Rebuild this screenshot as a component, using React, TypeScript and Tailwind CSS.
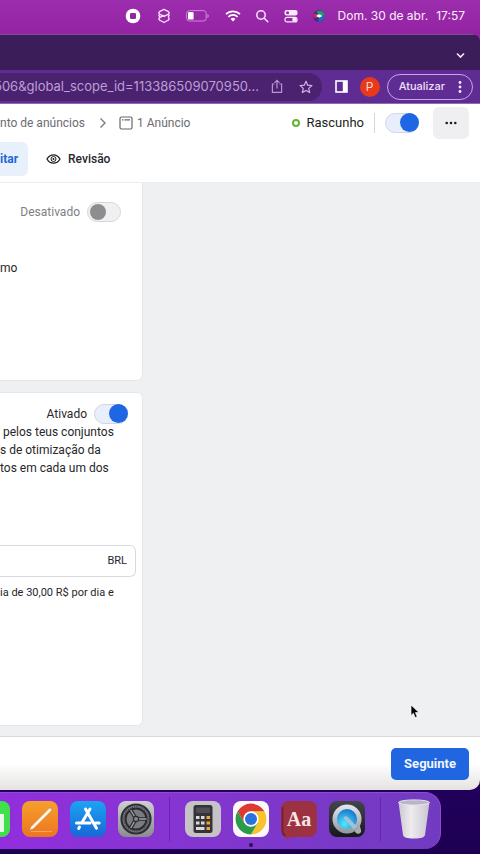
import { useState } from "react";
import type { ReactNode } from "react";

function Toggle({ label, initial }: { label: string; initial: boolean }) {
  const [on, setOn] = useState(initial);
  return (
    <input
      type="checkbox"
      role="switch"
      aria-label={label}
      checked={on}
      onChange={() => setOn(!on)}
      className="relative h-5 w-[34px] shrink-0 appearance-none rounded-full border border-[#d8d8dc] bg-[#f0f0f2] before:absolute before:left-0.5 before:top-px before:size-4 before:rounded-full before:bg-[#8d8d8f] checked:border-[#cfd6e6] checked:bg-[#e8effb] checked:before:-top-px checked:before:left-3.5 checked:before:size-[19px] checked:before:bg-[#1f66e5]"
    />
  );
}

function MenuBar() {
  return (
    <header className="flex h-[34px] items-center justify-end pr-[15px] pb-0.5 text-[#f7e6fa]">
      <div className="flex items-center">
        <svg width="16" height="16" viewBox="0 0 16 16" className="mr-[15px]">
          <circle cx="8" cy="8" r="7.3" fill="#fff" />
          <rect x="5" y="5" width="6" height="6" rx="1.2" fill="#8a2a9c" />
        </svg>
        <svg width="16" height="16" viewBox="0 0 16 16" fill="none" stroke="currentColor" strokeWidth="1.3" strokeLinejoin="round" className="mr-3.5">
          <path d="M8 1.4 12 3.3c1.600.8 1.600 2.200 0 3L8 8.300 4 6.300c-1.600-.8-1.600-2.200 0-3z" />
          <path d="M4 6.300c-1.500.8-1.500 1.800 0 2.600M12 6.300c1.500.8 1.500 1.800 0 2.600" />
          <path d="M8 7.300 4 9.300c-1.600.8-1.600 2.200 0 3l4 2.200 4-2.200c1.600-.8 1.600-2.200 0-3" />
        </svg>
        <svg width="23" height="12" viewBox="0 0 23 12" className="mr-4">
          <rect x=".6" y=".6" width="19.6" height="10.4" rx="2.8" fill="none" stroke="#cf86d8" strokeWidth="1" />
          <rect x="2" y="2" width="5.6" height="7.6" rx="1.2" fill="#fff" />
          <path d="M21.4 4v3.8c1-.4 1.4-1 1.4-1.9s-.4-1.5-1.4-1.9z" fill="#cf86d8" />
        </svg>
        <svg width="16" height="12" viewBox="0 0 16 12" fill="none" stroke="#fff" className="mr-3.5">
          <path d="M1 4.2a10 10 0 0 1 14 0" strokeWidth="1.7" />
          <path d="M3.4 6.8a6.6 6.6 0 0 1 9.2 0" strokeWidth="1.7" />
          <path d="M5.6 8.9a3.5 3.5 0 0 1 4.8 0L8 11.4z" fill="#fff" stroke="none" />
        </svg>
        <svg width="14" height="14" viewBox="0 0 14 14" fill="none" stroke="currentColor" strokeWidth="1.5" strokeLinecap="round" className="mr-[15px]">
          <circle cx="6" cy="6" r="4.2" />
          <path d="m9.2 9.2 3.6 3.6" />
        </svg>
        <svg width="14" height="14" viewBox="0 0 14 14" className="mr-3.5">
          <rect x=".5" y="1" width="13" height="5.4" rx="2" fill="#f9e9fb" />
          <circle cx="3.600" cy="3.700" r="1.500" fill="#8f2ba2" />
          <rect x="1" y="8.3" width="12" height="4.6" rx="2" fill="none" stroke="#f9e9fb" strokeWidth="1.2" />
          <circle cx="10.400" cy="10.600" r="2.200" fill="#f9e9fb" />
        </svg>
        <svg width="14" height="14" viewBox="0 0 14 14" className="mr-3">
          <circle cx="7" cy="7" r="6" fill="#4a2a80" />
          <path d="M4.500 2.500c4-2 8 .5 8.300 4L7 7z" fill="#1f9c74" />
          <path d="M12.800 6.500c.2 4-3 6.500-6.300 6.300L7 7z" fill="#2568b8" />
          <path d="M1.200 6.500c0-2 2.500-3 6 .3-2 3-5.500 2.700-6-.3z" fill="#c0305f" />
          <path d="M4.500 7c1-1.800 4-2 5.500 0-1.500 2-4.500 1.800-5.500 0z" fill="#fff" />
        </svg>
      </div>
      <div className="flex gap-2 font-['Inter','Liberation_Sans',sans-serif] text-xs text-[#fbeefc]">
        <span>Dom. 30 de abr.</span>
        <time>17:57</time>
      </div>
    </header>
  );
}

function BrowserChrome() {
  return (
    <>
      <div className="flex h-9 items-center justify-end border-t border-[#7d4e9a] bg-[#3b1e59] pt-1.5 pr-3.5">
        <button aria-label="Pesquisar separadores">
          <svg width="11" height="11" viewBox="0 0 11 11" fill="none" stroke="#f1e8f8" strokeWidth="1.600">
            <path d="m2 3.500 3.500 3.500L9 3.500" />
          </svg>
        </button>
      </div>
      <div className="flex h-[34px] items-center border-b border-[#8d6db0] bg-[#5f2c94] font-['Inter','Liberation_Sans',sans-serif]">
        <div className="flex h-7 min-w-0 flex-1 items-center rounded-r-full bg-[#4a226f] pr-[9px]">
          <input
            aria-label="Endereço"
            readOnly
            value="506&global_scope_id=113386509070950..."
            className="-ml-1.5 min-w-0 flex-1 bg-transparent text-[13px] text-[#bd9fd6] outline-none"
          />
          <button aria-label="Partilhar" className="mr-[15px]">
            <svg width="14" height="15" viewBox="0 0 14 15" fill="none" stroke="#b795d3" strokeWidth="1.200">
              <path d="M4.500 5H2.400v8.300h9.200V5H9.500M7 9.500V1.500M4.500 3.900 7 1.400l2.500 2.500" />
            </svg>
          </button>
          <button aria-label="Marcar">
            <svg width="14" height="14" viewBox="0 0 14 14" fill="none" stroke="#cfb3e6" strokeWidth="1.200" strokeLinejoin="round">
              <path d="m7 1.300 1.700 3.900 4.200.4-3.200 2.800 1 4.200L7 10.400l-3.700 2.200 1-4.200L1.100 5.600l4.200-.4z" />
            </svg>
          </button>
        </div>
        <button aria-label="Painel lateral" className="ml-[13px]">
          <svg width="13" height="13" viewBox="0 0 13 13">
            <rect x="1" y="1" width="11" height="11" fill="none" stroke="#fff" strokeWidth="1.600" />
            <path d="M7.800 1H12v11H7.800z" fill="#fff" />
          </svg>
        </button>
        <button className="ml-3 size-5 rounded-full bg-[#e8391b] text-xs text-[#ffd9cc]">P</button>
        <button className="mx-[7px] flex h-[26px] items-center rounded-full border border-[#c9a6ea] pr-2.5 pl-[11px] text-[11px] font-medium text-[#f0e0fb]">
          Atualizar
          <svg width="4" height="14" viewBox="0 0 4 14" fill="#f5eafd" className="ml-[13px]">
            <circle cx="2" cy="2.500" r="1.400" />
            <circle cx="2" cy="7" r="1.400" />
            <circle cx="2" cy="11.500" r="1.400" />
          </svg>
        </button>
      </div>
    </>
  );
}

function PageHeader() {
  return (
    <div className="border-b border-[#ededef] bg-white">
      <div className="flex h-[38px] items-center pr-[11px]">
        <nav className="flex items-center text-xs text-[#6b6c72]">
          <a href="#conjunto" className="whitespace-nowrap">nto de anúncios</a>
          <svg width="8" height="12" viewBox="0 0 8 12" fill="none" stroke="#7b7c82" strokeWidth="1.400" className="ml-3.5">
            <path d="m1.500 1.500 4.500 4.500-4.500 4.500" />
          </svg>
          <a href="#anuncio" className="ml-3 flex items-center gap-1 whitespace-nowrap">
            <svg width="14" height="14" viewBox="0 0 14 14" fill="none" stroke="#65666c" strokeWidth="1.200">
              <rect x="1" y="1" width="12" height="12" rx="1.500" />
              <path d="M3 3.800h1.500M5.500 3.800h5.500" />
            </svg>
            1 Anúncio
          </a>
        </nav>
        <div className="ml-auto flex items-center">
          <span className="size-2 rounded-full border-2 border-[#66b32e]" />
          <span className="ml-1.5 text-[13px] text-[#1c1e21]">Rascunho</span>
          <span className="mr-2.5 ml-2.5 h-5 w-px bg-[#d5d6da]" />
          <Toggle label="Rascunho" initial={true} />
          <button aria-label="Mais opções" className="ml-3.5 flex h-8 w-9 items-center justify-center rounded-md bg-[#efeff1]">
            <svg width="12" height="4" viewBox="0 0 12 4" fill="#1c1e21">
              <circle cx="1.700" cy="2" r="1.300" />
              <circle cx="6" cy="2" r="1.300" />
              <circle cx="10.300" cy="2" r="1.300" />
            </svg>
          </button>
        </div>
      </div>
      <div className="flex h-10 items-start font-medium">
        <button className="h-[34px] rounded-r-md bg-[#e8f0fc] pr-2.5 text-xs font-bold text-[#1f66d5]">itar</button>
        <button className="ml-[18px] flex h-[34px] items-center gap-[7px] text-xs text-[#26272b]">
          <svg width="15" height="12" viewBox="0 0 15 12" fill="none" stroke="#1c1e21" strokeWidth="1.300">
            <path d="M1 6c1.500-2.700 3.700-4.200 6.500-4.200S12.500 3.300 14 6c-1.500 2.700-3.700 4.200-6.500 4.200S2.500 8.700 1 6z" />
            <circle cx="7.500" cy="6" r="2.500" strokeWidth="1" />
            <circle cx="7.500" cy="6" r="1" fill="#1c1e21" stroke="none" />
          </svg>
          Revisão
        </button>
      </div>
    </div>
  );
}

function Campaign() {
  return (
    <main className="flex bg-[#eff0f2] pb-2.5">
      <div className="flex w-[143px] shrink-0 flex-col gap-[11px] text-xs text-[#26272b]">
        <section className="h-[198px] rounded-br-md border-r border-b border-[#e6e7e9] bg-white pt-[19px]">
          <div className="flex items-center justify-end gap-[7px] pr-[21px] text-[#7e7f83]">
            <span>Desativado</span>
            <Toggle label="Desativado" initial={false} />
          </div>
          <p className="mt-[37px] leading-[18px]">mo</p>
        </section>
        <section className="h-[334px] rounded-r-md border border-l-0 border-[#e6e7e9] bg-white pt-3">
          <div className="flex h-[18px] items-center justify-end gap-[7px] pr-3.5">
            <span>Ativado</span>
            <Toggle label="Ativado" initial={true} />
          </div>
          <p className="leading-[18px] whitespace-nowrap">
            <span className="ml-[3px]">pelos teus conjuntos</span>
            <br />
            s de otimização da
            <br />
            tos em cada um dos
          </p>
          <label className="mt-[68px] mr-1.5 flex h-8 items-center rounded-r-md border border-l-0 border-[#d9dadd] pr-2 text-[11px]">
            <input aria-label="Orçamento diário" className="min-w-0 flex-1 bg-transparent outline-none" />
            BRL
          </label>
          <p className="mt-2 text-[11px] leading-4 whitespace-nowrap">ia de 30,00 R$ por dia e</p>
        </section>
      </div>
    </main>
  );
}

function DockIcon({ name, children }: { name: string; children: ReactNode }) {
  return (
    <button aria-label={name} className="shrink-0">
      <svg width="36" height="36" viewBox="0 0 36 36">{children}</svg>
    </button>
  );
}

function Dock() {
  return (
    <footer className="mt-0.5 mr-[39px] flex h-[57px] items-center justify-end overflow-hidden rounded-r-2xl border-t border-r border-[#9349cf] bg-linear-to-r from-[#922edd] to-[#713bc0] pr-2 pb-1">
      <div className="flex shrink-0 gap-3">
        <DockIcon name="Numbers">
          <rect width="36" height="36" rx="8" fill="#3fe04c" />
          <path d="M24 13h6v18h-6zM16 20h6v11h-6z" fill="#e9fbe8" />
        </DockIcon>
        <DockIcon name="Pages">
          <defs>
            <linearGradient id="pages" x2="0" y2="1">
              <stop stopColor="#f6a02c" />
              <stop offset="1" stopColor="#ee7420" />
            </linearGradient>
          </defs>
          <rect width="36" height="36" rx="8" fill="url(#pages)" />
          <path d="M9 30.500h21" stroke="#f9a660" strokeWidth="1" />
          <path d="M7 29.500 9 25.500 26.800 7.600c1.600-1.500 4 .8 2.600 2.500L11.500 27.800z" fill="#fff3e2" stroke="#b5793a" strokeWidth=".6" />
        </DockIcon>
        <DockIcon name="App Store">
          <defs>
            <linearGradient id="store" x2="0" y2="1">
              <stop stopColor="#1ca4f2" />
              <stop offset="1" stopColor="#1767d8" />
            </linearGradient>
          </defs>
          <rect width="36" height="36" rx="8" fill="url(#store)" />
          <g stroke="#fff" strokeWidth="3" strokeLinecap="round">
            <path d="m20 8-8.300 14M9.500 26l-.8 1.400M15.500 8 26.500 27.200M6.500 22h13.500M25.500 22h3.700" />
          </g>
        </DockIcon>
        <DockIcon name="Definições do Sistema">
          <defs>
            <linearGradient id="gear" x2="0" y2="1">
              <stop stopColor="#cfcfd3" />
              <stop offset="1" stopColor="#8b8b91" />
            </linearGradient>
          </defs>
          <rect width="36" height="36" rx="8" fill="url(#gear)" />
          <circle cx="18" cy="18" r="14.500" fill="#7c7d82" stroke="#2e2f34" strokeWidth="2.200" />
          <circle cx="18" cy="18" r="10.500" fill="#7a7b80" stroke="#2a2b30" strokeWidth="2" />
          <circle cx="18" cy="18" r="12.200" fill="none" stroke="#3e3f44" strokeWidth="1.200" strokeDasharray="1.200 1" />
          <path d="M18 18h10.500M18 18l-5.300-9M18 18l-5.300 9" stroke="#2a2b30" strokeWidth="3.600" />
          <path d="M18 18h10.500M18 18l-5.300-9M18 18l-5.300 9" stroke="#a2a3a8" strokeWidth="1.400" />
          <circle cx="18" cy="18" r="2.600" fill="#85868b" stroke="#2a2b30" strokeWidth="1.200" />
        </DockIcon>
      </div>
      <span className="mx-[15px] h-11 w-px shrink-0 bg-[#6a22b4]" />
      <div className="flex shrink-0 gap-3">
        <DockIcon name="Calculadora">
          <rect width="36" height="36" rx="8" fill="#c5c3c6" />
          <rect x="8.500" y="4" width="19" height="28" rx="2.500" fill="#333338" />
          <rect x="11" y="6.500" width="14" height="5.500" rx="1" fill="#4e4e55" />
          <g fill="#d9d9de">
            <path d="M11 15h3.500v3H11zM16 15h3.500v3H16zM11 20.500h3.500v3H11zM16 20.500h3.500v3H16zM11 26h8.500v3H11z" />
          </g>
          <path d="M21.500 15H25v3h-3.500zM21.500 20.500H25v3h-3.500zM21.500 26H25v3h-3.500z" fill="#f4a434" />
        </DockIcon>
        <div className="relative h-9">
          <DockIcon name="Chrome">
            <rect width="36" height="36" rx="8" fill="#fbf7fb" />
            <path d="M18 10.300h13.400A15.500 15.500 0 0 1 18 33.500l6.700-11.600z" fill="#f9c32c" />
            <path d="M4.600 10.300A15.500 15.500 0 0 1 31.400 10.300H18l-6.700 11.600z" fill="#dd3b30" />
            <path d="M4.600 10.300A15.500 15.500 0 0 0 18 33.500l6.700-11.600H11.300z" fill="#2d9a4b" />
            <circle cx="18" cy="18" r="7.700" fill="#fff" />
            <circle cx="18" cy="18" r="6" fill="#2b72de" />
          </DockIcon>
          <span className="absolute -bottom-2.5 left-4 size-1 rounded-full bg-[#2a0b52]" />
        </div>
        <button aria-label="Dicionário" className="relative size-9 rounded-lg bg-[#9c3142] font-['Liberation_Serif',serif] text-xl leading-9 font-bold text-[#f8e6e4]">
          <svg width="36" height="38" viewBox="0 0 36 38" className="absolute top-0 left-0">
            <path d="M2 30v3l4 5 6-3H6a4 4 0 0 1-4-5z" fill="#b02c38" />
            <path d="M1.500 6v24c0 2 1 4 3 5" fill="none" stroke="#762331" strokeWidth="2" />
          </svg>
          <span className="relative">Aa</span>
        </button>
        <DockIcon name="QuickTime Player">
          <defs>
            <linearGradient id="qtBody" x2="0" y2="1">
              <stop stopColor="#45464b" />
              <stop offset="1" stopColor="#17181b" />
            </linearGradient>
            <linearGradient id="qtRim" x2="0" y2="1">
              <stop stopColor="#dfe2e7" />
              <stop offset="1" stopColor="#979ba4" />
            </linearGradient>
            <radialGradient id="qt" cx=".4" cy=".7" r=".6">
              <stop stopColor="#4deaff" />
              <stop offset="1" stopColor="#1a78cf" />
            </radialGradient>
          </defs>
          <rect width="36" height="36" rx="8" fill="url(#qtBody)" />
          <path d="m24 28 6-6 2 7c1 3-3 5-5 3z" fill="#a9adb5" />
          <circle cx="18" cy="18" r="12.300" fill="url(#qt)" stroke="url(#qtRim)" strokeWidth="4.500" />
          <path d="M14.500 17.500c0-2 2.500-3 4-1.500l9.500 9.500-3 3z" fill="#9fc3d6" />
        </DockIcon>
      </div>
      <span className="mx-[15px] h-11 w-px shrink-0 bg-[#5f2ba8]" />
      <button aria-label="Lixo" className="shrink-0">
        <svg width="36" height="42" viewBox="0 0 36 42">
          <defs>
            <linearGradient id="trash" x2="1" y2="0">
              <stop stopColor="#cbc8d0" />
              <stop offset=".4" stopColor="#eeecf0" />
              <stop offset="1" stopColor="#c9c5ce" />
            </linearGradient>
          </defs>
          <path d="M2.500 4h31l-4.500 33c-.5 2.500-4 3.500-11 3.500S7.500 39.500 7 37z" fill="url(#trash)" />
          <ellipse cx="18" cy="4.500" rx="15.500" ry="2.600" fill="#bcb4c8" stroke="#e6e2ea" strokeWidth="1" />
        </svg>
      </button>
    </footer>
  );
}

export default function App() {
  return (
    <div className="relative min-h-screen overflow-hidden bg-[linear-gradient(to_bottom,#9c2dac,#8d1c9d_60px,#5d1286_200px,#230066_700px,#1e0052)] font-['Roboto','Liberation_Sans',sans-serif]">
      <MenuBar />
      <div className="overflow-hidden rounded-tr-lg rounded-br-[10px]">
        <BrowserChrome />
        <PageHeader />
        <Campaign />
        <div className="flex h-[54px] items-center justify-end border-t border-[#dadadd] bg-linear-to-b from-white from-50% to-[#e5e3e2] pr-[11px]">
          <button className="h-8 rounded-[5px] bg-[#1f66e0] px-[13px] text-[13px] font-bold text-[#f1f6ff]">Seguinte</button>
        </div>
      </div>
      <Dock />
      <svg width="10" height="15" viewBox="0 0 10 15" className="absolute top-[704px] left-[410px]">
        <path d="M1 1v10.500l2.400-2.200 1.800 4.300 2-.9-1.800-4.100H9z" fill="#000" stroke="#fff" strokeWidth=".7" />
      </svg>
    </div>
  );
}
